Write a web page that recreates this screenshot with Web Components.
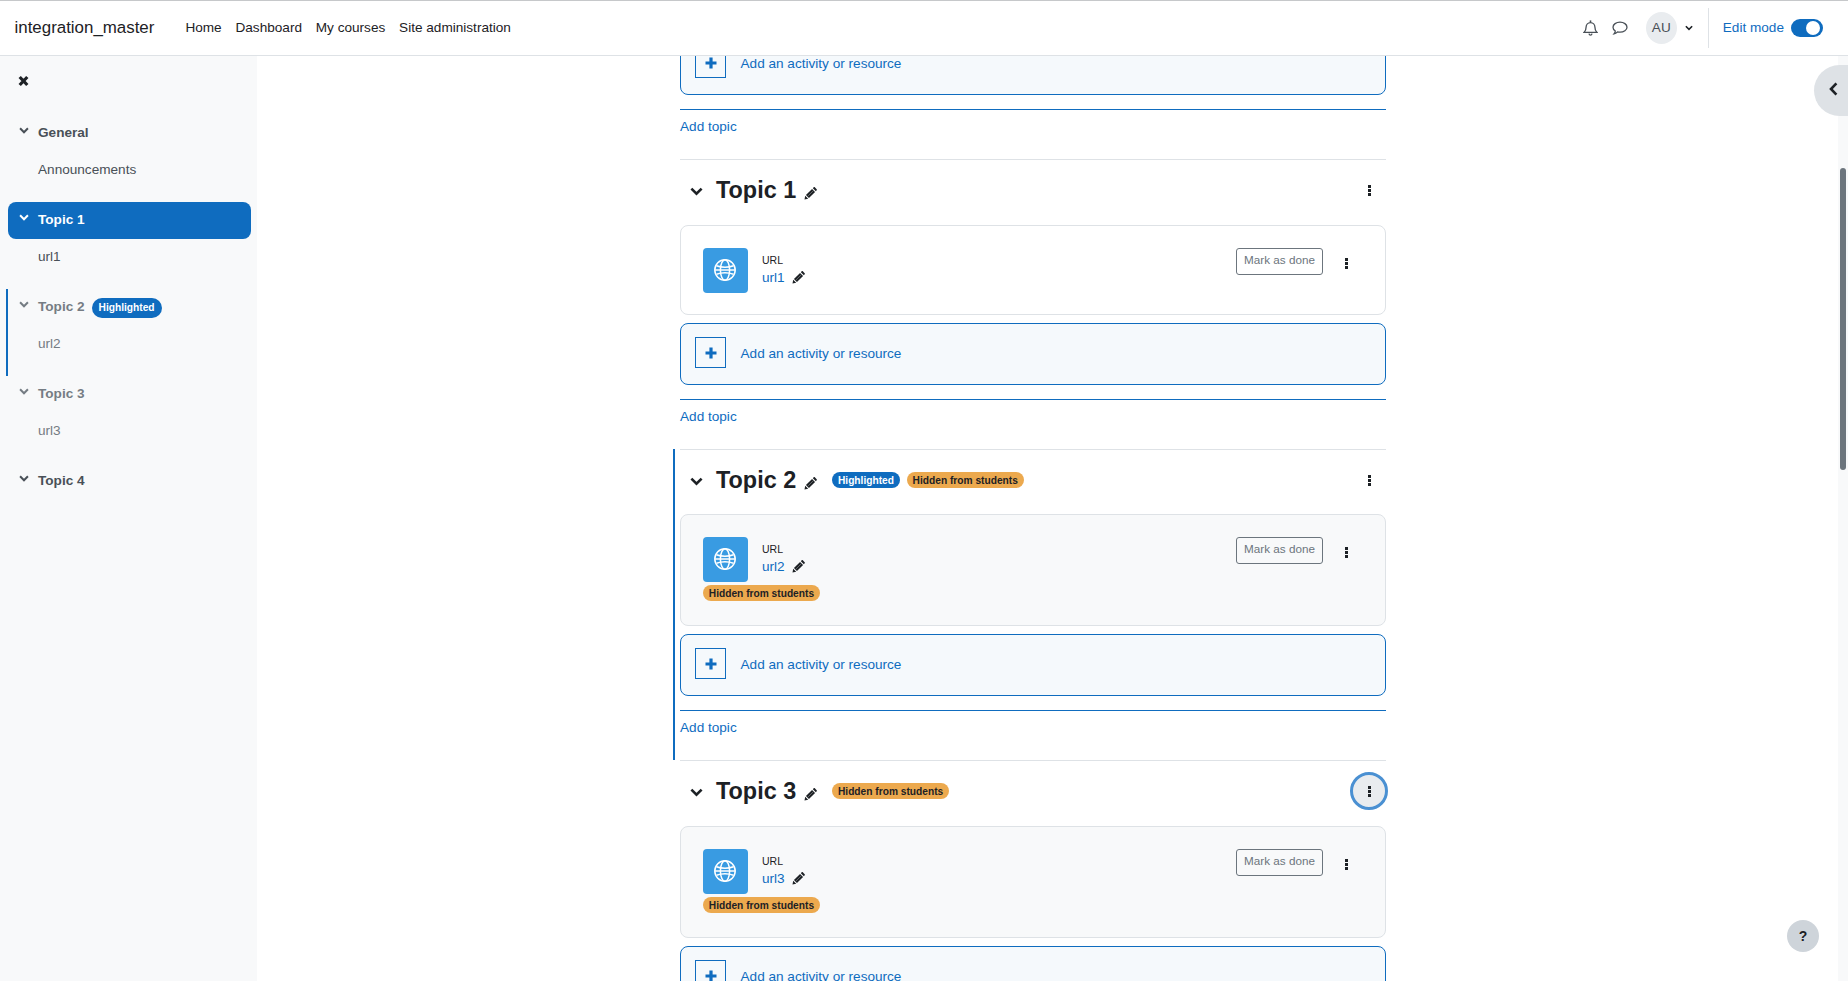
<!DOCTYPE html>
<html lang="en"><head><meta charset="utf-8"><title>integration_master</title>
<style>
html,body{margin:0;height:100%;overflow:hidden;font-family:"Liberation Sans",Arial,sans-serif;color:#1d2125;background:#fff}
</style></head><body>
<moodle-app>
  <moodle-navbar slot="nav"></moodle-navbar>
  <course-index slot="index">
    <index-section name="General" item="Announcements"></index-section>
    <index-section name="Topic 1" item="url1" current></index-section>
    <index-section name="Topic 2" item="url2" dim marked></index-section>
    <index-section name="Topic 3" item="url3" dim></index-section>
    <index-section name="Topic 4"></index-section>
  </course-index>
  <course-content slot="main">
    <add-activity></add-activity><add-topic></add-topic>
    <topic-section name="Topic 1" url="url1"></topic-section>
    <topic-section name="Topic 2" url="url2" marked hidden-topic></topic-section>
    <topic-section name="Topic 3" url="url3" hidden-topic focus last></topic-section>
  </course-content>
</moodle-app>
<script>
const PENCIL=`<svg viewBox="0 0 16 16" width="100%" height="100%" style="display:block"><path fill="currentColor" d="M.6 15.4l.9-4.6 3.7 3.7zM2.4 9.9l7.5-7.5 3.7 3.7-7.5 7.5zM10.9 1.4l1-1c.4-.4 1-.4 1.4 0l2.3 2.3c.4.4.4 1 0 1.4l-1 1z"/><path stroke="#fff" stroke-opacity=".55" stroke-width=".7" fill="none" d="M5 11l6-6"/></svg>`;
const CHEV=`<svg viewBox="0 0 14 9" width="100%" height="100%" style="display:block"><path d="M1.5 1.4L7 6.9l5.5-5.5" fill="none" stroke="currentColor" stroke-width="2.8"/></svg>`;
const DOTS=`<svg viewBox="0 0 3 11" width="3" height="11" style="display:block"><path fill="#1d2125" d="M0 0h3v3H0zM0 4h3v3H0zM0 8h3v3H0z"/></svg>`;
const GLOBE=`<svg viewBox="0 0 24 24" width="24" height="24" style="display:block" fill="none" stroke="#fff" stroke-width="1.5"><circle cx="12" cy="12" r="10.2"/><ellipse cx="12" cy="12" rx="4.6" ry="10.2"/><path d="M3.4 7.8c5 1.7 12.2 1.7 17.2 0M1.8 12h20.4M3.4 16.2c5-1.7 12.2-1.7 17.2 0"/></svg>`;

function define(name,css,render){
  customElements.define(name,class extends HTMLElement{
    connectedCallback(){
      if(this.shadowRoot)return;
      const r=this.attachShadow({mode:'open'});
      r.innerHTML=`<style>${css}</style>`+render(this);
    }
  });
}

define('moodle-app',`
:host{display:grid;grid-template-rows:56px 925px;grid-template-columns:257px 1fr;height:100vh;overflow:hidden;position:relative}
.nav{grid-column:1/3;display:block;min-width:0}
`,()=>`<div class="nav"><slot name="nav"></slot></div><slot name="index"></slot><slot name="main"></slot><page-aside></page-aside>`);

define('page-aside',`
:host{display:contents}
.rail{position:absolute;right:0;top:56px;bottom:0;width:10px;background:#f8f9fa}
.thumb{width:6px;height:302px;margin:112px 2px 0;border-radius:3px;background:#6c757d}
.toggle{position:absolute;right:0;top:65px;width:34px;height:51px;background:#dee2e6;border-radius:26px 0 0 26px;display:flex;align-items:center;padding:0 0 4px 15px;box-sizing:border-box}
.help{position:absolute;left:1787px;top:920px;width:32px;height:32px;border-radius:50%;background:#ced4da;display:flex;align-items:center;justify-content:center;font:700 14px "Liberation Sans",Arial,sans-serif;color:#1d2125}
`,()=>`<div class="rail"><div class="thumb"></div></div><div class="toggle"><svg viewBox="0 0 9 14" width="9" height="14"><path d="M7.4 1.4L2 7l5.4 5.6" fill="none" stroke="#1d2125" stroke-width="2.6"/></svg></div><div class="help">?</div>`);

define('moodle-navbar',`
:host{display:flex;align-items:center;height:56px;box-sizing:border-box;border-top:1px solid #c6c8ca;border-bottom:1px solid #dee2e6;background:#fff;font-size:13.6px;padding:0 25px 0 14.5px;color:#1d2125}
.brand{font-size:16.9px;margin-right:31px;margin-top:-1px}
nav{display:flex;gap:13.8px;margin-top:-1px}
.right{margin-left:auto;display:flex;align-items:center;margin-top:-1px}
.ic{display:block;margin-top:1px}
.avatar{width:31px;height:32px;border-radius:50%;background:#e9ecef;color:#495057;display:flex;align-items:center;justify-content:center;margin-left:18px}
.caret{width:8px;height:6px;margin-left:8px;color:#1d2125}
.div{width:1px;height:40px;background:#dee2e6;margin:0 14px 0 15px}
.edit{color:#0f6cbf;margin-right:7px}
.switch{width:32px;height:18px;border-radius:9px;background:#0f6cbf;display:flex;align-items:center;justify-content:flex-end;padding-right:3px;box-sizing:border-box}
.knob{width:14px;height:14px;border-radius:50%;background:#fff}
`,()=>`<span class="brand">integration_master</span><nav><span>Home</span><span>Dashboard</span><span>My courses</span><span>Site administration</span></nav>
<div class="right">
<svg class="ic" width="15" height="16" viewBox="0 0 15 16" fill="none" stroke="#495057" stroke-width="1.3"><path d="M1.2 12.3c1-1 1.900-2.200 1.900-5.200 0-2.500 1.900-4.500 4.400-4.500s4.400 2 4.400 4.500c0 3 .9 4.200 1.900 5.200z"/><path d="M7.5.4v2" stroke-width="1.6"/><path d="M6 13.6c.2 1 .8 1.5 1.5 1.5s1.300-.5 1.500-1.500" stroke-width="1.4"/></svg>
<svg class="ic" style="margin-left:14px" width="16" height="15" viewBox="0 0 16 15" fill="none" stroke="#495057" stroke-width="1.3"><path d="M8 1.2c3.800 0 7 2.200 7 5s-3.200 5-7 5c-.9 0-1.700-.1-2.400-.3-.8.8-2 1.800-3.600 2 .7-.8 1.200-1.700 1.300-2.900C1.900 9.200 1 7.800 1 6.200c0-2.800 3.200-5 7-5z"/></svg>
<div class="avatar">AU</div>
<div class="caret">${CHEV}</div>
<div class="div"></div>
<span class="edit">Edit mode</span><div class="switch"><div class="knob"></div></div>
</div>`);

define('course-index',`
:host{display:block;background:#f8f9fa;padding:0 6px;box-sizing:border-box;overflow:hidden;min-height:0}
.x{height:59px;display:flex;align-items:flex-start;padding:19px 0 0 12px;box-sizing:border-box}
`,()=>`<div class="x"><svg width="11" height="12" viewBox="0 0 11 12"><path d="M1.7 2l3.800 4 3.800-4M1.700 10l3.800-4 3.800 4" fill="none" stroke="#1d2125" stroke-width="3.2"/></svg></div><slot></slot>`);

define('index-section',`
:host{display:block;height:87px;font-size:13.6px;color:#495057;box-sizing:border-box;border-left:2px solid transparent}
:host([marked]){border-left-color:#0f6cbf}
.title{height:37px;display:flex;align-items:center;font-weight:700;border-radius:8px;padding:0 0 3px 11px;width:243px;box-sizing:border-box}
:host([current]) .title{background:#0f6cbf;color:#fff}
.chev{width:10px;height:7px;margin-right:9px;margin-top:-4px}
.item{height:37px;display:flex;align-items:center;padding:0 0 3px 30px;box-sizing:border-box}
:host([dim]) .title,:host([dim]) .item{color:#757c83}
.badge{margin:3px 0 0 7px;background:#0f6cbf;color:#fff;font-size:10.2px;height:20px;width:70px;border-radius:10px;display:flex;align-items:center;justify-content:center}
`,h=>`<div class="title"><div class="chev">${CHEV}</div><span>${h.getAttribute('name')}</span>${h.hasAttribute('marked')?'<span class="badge">Highlighted</span>':''}</div>${h.getAttribute('item')?`<div class="item">${h.getAttribute('item')}</div>`:''}`);

define('course-content',`
:host{display:block;overflow:hidden;min-height:0;background:#fff}
.col{width:706px;margin-left:423px;padding-top:320px;height:2833px;box-sizing:border-box}
`,()=>`<div class="col"><slot></slot></div>`);

define('add-activity',`
:host{display:flex;align-items:center;height:62px;box-sizing:border-box;border:1px solid #0f6cbf;border-radius:8px;background:#f5f9fc;padding:0 0 2px 14px;font-size:13.6px;color:#0f6cbf}
.plus{width:31px;height:31px;box-sizing:border-box;border:1px solid #0f6cbf;display:flex;align-items:center;justify-content:center;margin-right:14.5px;margin-top:-1px}
`,()=>`<div class="plus"><svg width="12" height="12" viewBox="0 0 12 12"><path d="M6 .5v11M.5 6h11" stroke="#0f6cbf" stroke-width="3.2"/></svg></div><span>Add an activity or resource</span>`);

define('add-topic',`
:host{display:block;margin-top:14px;border-top:1px solid #0f6cbf;font-size:13.6px;color:#0f6cbf;height:50px;box-sizing:border-box;padding-top:9px;line-height:16px}
`,()=>`Add topic`);

define('state-badge',`
:host{display:inline-flex;align-items:center;justify-content:center;height:15.5px;border-radius:8px;font-size:10.2px;font-weight:700;padding:0 5.8px;background:#eca94e;color:#1d2125;white-space:nowrap}
:host([blue]){background:#0f6cbf;color:#fff}
`,()=>`<slot></slot>`);

define('topic-section',`
:host{display:block;box-sizing:border-box}
:host([marked]){margin-left:-7px;padding-left:5px;border-left:2px solid #0f6cbf}
.inner{border-top:1px solid #dee2e6}
.head{height:65px;display:flex;align-items:center;box-sizing:border-box;padding:0 0 5px 10px}
:host([marked]) .head{height:64px;padding-bottom:4px}
.chev{width:13px;height:9px;color:#1d2125;margin-right:13px;margin-top:2px}
h3{margin:0;font-size:23.4px;font-weight:700;line-height:28px;color:#1d2125}
.pen{width:13px;height:13px;margin-left:8px;margin-top:7px;color:#1d2125}
.badges{display:flex;gap:7px;margin-left:15px}
.menu{margin-left:auto;width:38px;height:38px;margin-right:-2px;box-sizing:border-box;border-radius:50%;display:flex;align-items:center;justify-content:center}
:host([focus]) .menu{background:#e9ecef;border:3px solid #4a90d2}
.adder{margin-top:8px}
`,h=>{
  const hid=h.hasAttribute('hidden-topic');
  return `<div class="inner"><div class="head"><div class="chev">${CHEV}</div><h3>${h.getAttribute('name')}</h3><div class="pen">${PENCIL}</div>
  ${(hid||h.hasAttribute('marked'))?`<div class="badges">${h.hasAttribute('marked')?'<state-badge blue>Highlighted</state-badge>':''}${hid?'<state-badge>Hidden from students</state-badge>':''}</div>`:''}
  <div class="menu">${DOTS}</div></div>
  <activity-card url="${h.getAttribute('url')}" ${hid?'hidden-item':''}></activity-card>
  <div class="adder"><add-activity></add-activity></div>
  ${h.hasAttribute('last')?'':'<add-topic></add-topic>'}</div>`;
});

define('activity-card',`
:host{display:block;box-sizing:border-box;height:90px;border:1px solid #dee2e6;border-radius:8px;padding:22px 0 0 18px;background:#fff}
:host([hidden-item]){height:112px;background:#f8f9fa}
.row{display:flex;padding-left:4px}
.icon{width:45px;height:45px;border-radius:4px;background:#399be2;display:flex;align-items:center;justify-content:center;flex:none;box-sizing:border-box;padding:0 1px 1px 0}
.txt{margin-left:14px;padding-top:5px}
.type{font-size:10.5px;line-height:14px;color:#1d2125}
.name{display:flex;align-items:center;font-size:13.6px;line-height:18px;color:#0f6cbf;margin-top:1.5px}
.pen{width:13px;height:13px;margin-left:7px;color:#1d2125}
.done{margin-left:auto;height:27px;width:87px;box-sizing:border-box;border:1px solid #6c757d;border-radius:3px;font-size:11.7px;color:#6c757d;display:flex;align-items:center;justify-content:center;padding-bottom:4px}
.menu{width:3px;margin:10px 37px 0 22px}
.b{margin:3px 0 0 4px;display:flex}
state-badge{height:16px}
`,h=>`<div class="row"><div class="icon">${GLOBE}</div><div class="txt"><div class="type">URL</div><div class="name"><span>${h.getAttribute('url')}</span><div class="pen">${PENCIL}</div></div></div><div class="done">Mark as done</div><div class="menu">${DOTS}</div></div>${h.hasAttribute('hidden-item')?'<div class="b"><state-badge>Hidden from students</state-badge></div>':''}`);

document.querySelector('course-content').scrollTop=343;
</script>
</body></html>
